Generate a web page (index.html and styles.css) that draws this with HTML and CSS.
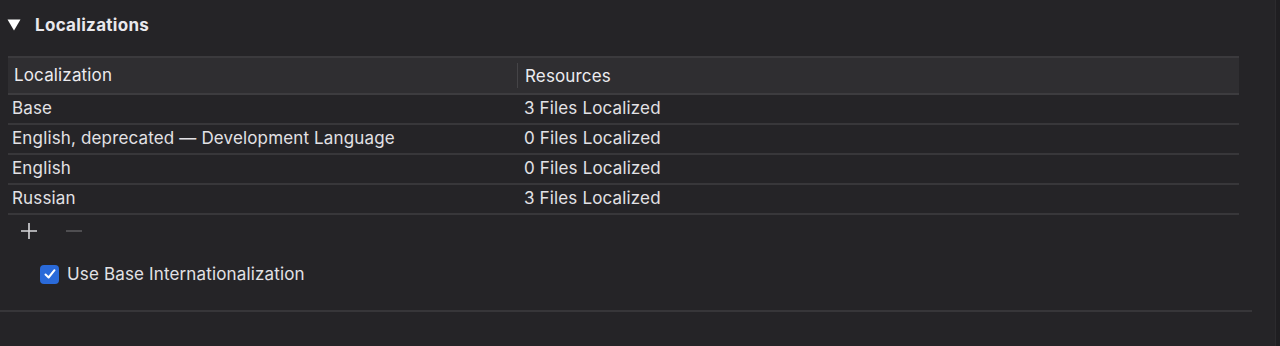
FILE: index.html
```html
<!DOCTYPE html>
<html>
<head>
<meta charset="utf-8">
<link rel="stylesheet" href="styles.css">
</head>
<body>
<div class="page">
  <div class="main">
    <div class="section-title">
      <svg class="disclosure" width="14" height="12" viewBox="0 0 14 12"><path d="M0.5 0.5 H13.5 L7 11.5 Z" fill="#ffffff"/></svg>
      <span>Localizations</span>
    </div>
    <div class="table">
      <div class="thead">
        <div class="th col1">Localization</div>
        <div class="th col2">Resources</div>
      </div>
      <div class="row"><div class="td col1">Base</div><div class="td col2">3 Files Localized</div></div>
      <div class="row"><div class="td col1">English, deprecated — Development Language</div><div class="td col2">0 Files Localized</div></div>
      <div class="row"><div class="td col1">English</div><div class="td col2">0 Files Localized</div></div>
      <div class="row"><div class="td col1">Russian</div><div class="td col2">3 Files Localized</div></div>
    </div>
    <div class="controls">
      <svg width="18" height="18" viewBox="0 0 18 18"><path d="M9 1 V17 M1 9 H17" stroke="#d8d7db" stroke-width="1.6" fill="none"/></svg>
      <svg width="18" height="18" viewBox="0 0 18 18"><path d="M1 9 H17" stroke="#5a595d" stroke-width="1.6" fill="none"/></svg>
    </div>
    <label class="check">
      <span class="box"><svg width="14" height="14" viewBox="0 0 14 14"><path d="M2.5 7.5 L5.6 10.5 L11.5 3.2" stroke="#fff" stroke-width="2" fill="none" stroke-linecap="round" stroke-linejoin="round"/></svg></span>
      <span>Use Base Internationalization</span>
    </label>
    <div class="sep"></div>
  </div>
  <div class="edge"></div>
</div>
</body>
</html>
```

FILE: styles.css
```css
html, body {
  margin: 0;
  padding: 0;
  background: #252427;
  height: 346px;
  overflow: hidden;
}
body {
  font-family: Inter, "Noto Sans", "Liberation Sans", sans-serif;
  color: #e2e1e5;
  font-size: 17px;
  letter-spacing: 0.15px;
}
.page {
  display: flex;
  height: 346px;
}
.main {
  flex: 1;
  display: flex;
  flex-direction: column;
}
.edge {
  width: 4px;
  background: #1f1e21;
  border-left: 1px solid #2c2b2e;
}
.section-title {
  display: flex;
  align-items: center;
  height: 24px;
  margin-top: 13px;
  padding-left: 7px;
  font-weight: 700;
  font-size: 17px;
  letter-spacing: 0.3px;
  color: #e9e8ec;
}
.disclosure {
  margin-right: 14px;
}
.table {
  margin-top: 19px;
  margin-left: 8px;
  width: 1231px;
}
.thead {
  display: flex;
  height: 35px;
  background: #2f2e31;
  border-top: 2px solid #3b3a3d;
  border-bottom: 2px solid #3d3c3f;
  align-items: center;
}
.th {
  color: #ecebef;
}
.thead .col1 {
  width: 503px;
  padding-left: 6px;
  border-right: 1px solid #454447;
  height: 25px;
  line-height: 25px;
}
.thead .col2 {
  padding-left: 7px;
}
.row {
  display: flex;
  height: 28px;
  align-items: center;
  border-bottom: 2px solid #38373a;
}
.td {
  line-height: 24px;
  padding-bottom: 3px;
}
.row .col1 {
  width: 512px;
  padding-left: 4px;
}
.row .col2 {
  padding-left: 0;
}
.controls {
  display: flex;
  gap: 27px;
  align-items: center;
  margin-left: 20px;
  margin-top: 7px;
  height: 18px;
}
.check {
  display: flex;
  align-items: center;
  margin-left: 40px;
  margin-top: 24px;
  gap: 8px;
  color: #e2e1e5;
}
.box {
  width: 19px;
  height: 19px;
  border-radius: 4px;
  background: #2a6ad9;
  display: flex;
  align-items: center;
  justify-content: center;
}
.sep {
  margin-top: 26px;
  width: 1252px;
  height: 2px;
  background: #373639;
}
```
